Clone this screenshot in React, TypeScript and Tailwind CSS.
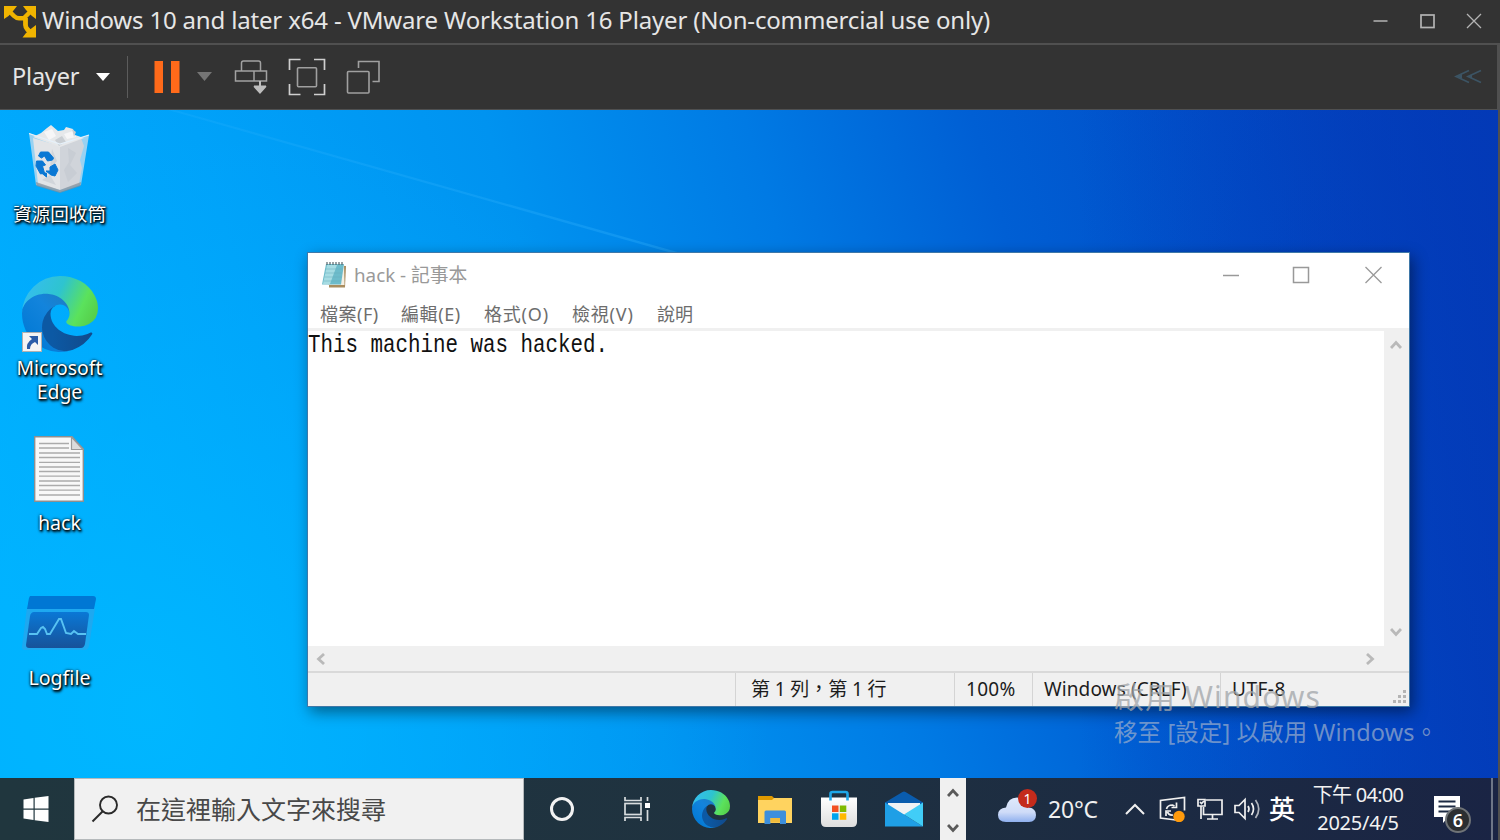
import type { ReactNode } from "react";

const UI = "font-['Noto_Sans','Noto_Sans_CJK_TC',sans-serif]";

function EdgeLogo({ id, className }: { id: string; className: string }) {
  return (
    <svg viewBox="0 0 256 256" className={className}>
      <defs>
        <linearGradient id={`${id}a`} x1="0.25" y1="0.5" x2="1" y2="0.5">
          <stop offset="0" stopColor="#0c59a4" />
          <stop offset="1" stopColor="#114a8b" />
        </linearGradient>
        <linearGradient id={`${id}b`} x1="0.9" y1="0.25" x2="0.2" y2="1">
          <stop offset="0" stopColor="#1b7fcb" />
          <stop offset="0.3" stopColor="#1384dc" />
          <stop offset="1" stopColor="#0078d4" />
        </linearGradient>
        <linearGradient id={`${id}c`} x1="0" y1="0.3" x2="1" y2="0.62">
          <stop offset="0" stopColor="#35bdf1" />
          <stop offset="0.45" stopColor="#2ec4cf" />
          <stop offset="0.8" stopColor="#5be25c" />
          <stop offset="1" stopColor="#56d04c" />
        </linearGradient>
      </defs>
      <g transform="translate(-4.63 -4.92)">
        <path fill={`url(#${id}a)`} d="M235.68 195.48a93.73 93.73 0 0 1-10.54 4.71 101.87 101.87 0 0 1-35.9 6.46c-47.32 0-88.54-32.55-88.54-74.32A31.48 31.48 0 0 1 117.13 105c-42.8 1.8-53.8 46.4-53.8 72.53 0 73.88 68.09 81.37 82.76 81.37 7.91 0 19.84-2.3 27-4.56l1.31-.44a128.34 128.34 0 0 0 66.6-52.8 4 4 0 0 0-5.32-5.62z" />
        <path fill={`url(#${id}b)`} d="M110.34 246.34A79.2 79.2 0 0 1 87.6 225a80.72 80.72 0 0 1 29.53-120c3.12-1.47 8.45-4.13 15.54-4a32.35 32.35 0 0 1 25.69 13 31.88 31.88 0 0 1 6.36 18.66c0-.21 24.46-79.6-80-79.6-43.9 0-80 41.66-80 78.21a130.15 130.15 0 0 0 12.11 56 128 128 0 0 0 156.38 67.11 75.55 75.55 0 0 1-62.78-8z" />
        <path fill={`url(#${id}c)`} d="M156.94 153.78c-.81 1.05-3.3 2.5-3.3 5.66 0 2.61 1.7 5.12 4.72 7.23 14.38 10 41.49 8.68 41.56 8.68a59.56 59.56 0 0 0 30.27-8.35 61.38 61.38 0 0 0 30.43-52.88c.26-22.41-8-37.31-11.34-43.91C228.09 28.76 182.35 4.92 132.61 4.92a128 128 0 0 0-128 126.2c.48-36.54 36.8-66.05 80-66.05 3.5 0 23.46.34 42 10.07 16.34 8.58 24.9 18.94 30.85 29.21 6.18 10.67 7.28 24.15 7.28 29.52s-2.74 13.33-7.8 19.91z" />
      </g>
    </svg>
  );
}

function TitleBar() {
  return (
    <header className="flex h-[43px] items-center bg-[#333333] pr-[17px] pl-1 text-[#e6e6e6]">
      <svg viewBox="0 0 32 32" className="mt-px h-8 w-8 shrink-0" fill="none" stroke="#f0b400" strokeWidth="4">
        <path d="M0 0h13l-3.500 4.500L4.500 10 0 13zM19 0h13v13l-4-3-6-6zM32 19v12.500H18.500l3.500-4.500 6-5z" fill="#f0b400" stroke="none" />
        <path d="M4 4l6 6q2.300 2.300 5 2.300h6" strokeWidth="4.500" />
        <path d="M28 4l-8 8" strokeWidth="4.500" />
        <path d="M28 28l-4.500-4.500q-2-2-2-4.500v-7" strokeWidth="4.800" />
      </svg>
      <h1 className="mb-[3px] ml-[6px] text-[24px] leading-[40px] tracking-[-0.17px] whitespace-pre">
        Windows 10 and later x64 - VMware Workstation 16 Player (Non-commercial use only)
      </h1>
      <svg viewBox="0 0 112 18" className="mb-[2px] ml-auto h-[18px] w-[112px]" fill="none" stroke="#b4b4b4" strokeWidth="1.5">
        <path d="M2.500 9h14" />
        <rect x="50" y="3" width="13" height="12.500" strokeWidth="1.7" />
        <path d="M96 2l14 14M110 2L96 16" strokeWidth="1.300" />
      </svg>
    </header>
  );
}

function Toolbar() {
  return (
    <nav className="mr-[3px] flex h-[64px] items-center bg-[#333333] text-[#e6e6e6]">
      <span className="mb-[3px] ml-[12px] w-[68px] text-[23.500px] leading-[58px] tracking-[-0.2px]">Player</span>
      <svg viewBox="0 0 14 8" className="ml-[16px] h-[8px] w-[14px]">
        <path d="M0 0h14L7 8z" fill="#fff" />
      </svg>
      <div className="ml-[17px] h-[42px] w-px bg-[#5c5c5c]" />
      <svg viewBox="0 0 26 34" className="ml-[26px] h-[34px] w-[26px]" fill="#ff6a1a">
        <path d="M.5 1h8.500v32H.5zM17 1h8.500v32H17z" />
      </svg>
      <svg viewBox="0 0 15 9" className="mb-[2px] ml-[17px] h-[9px] w-[15px]">
        <path d="M0 0h15L7.500 9z" fill="#757575" />
      </svg>
      <svg viewBox="0 0 36 36" className="ml-[22px] h-9 w-9" fill="none" stroke="#a2a2a2" strokeWidth="1.5">
        <path d="M7.500 11.500V4q0-2 2-2h15q2 0 2 2v7.500M1.500 12h31v10h-31zM20 12v10" />
        <path d="M26 22v11M20 27.500h12M21.500 28.500l4.500 5 4.500-5z" stroke="#bdbdbd" strokeWidth="2" fill="#bdbdbd" />
      </svg>
      <svg viewBox="0 0 38 38" className="ml-[18px] h-[38px] w-[38px]" fill="none">
        <path d="M1.500 12V1.500h11M26 1.500h10.500V12M36.500 26v10.500H26M12.500 36.500h-11V26" stroke="#cfcfcf" strokeWidth="1.7" />
        <rect x="9.500" y="9.700" width="19" height="19" rx="1" stroke="#a0a0a0" strokeWidth="1.6" />
      </svg>
      <svg viewBox="0 0 34 34" className="ml-[20px] h-[34px] w-[34px]" fill="none" stroke="#a0a0a0" strokeWidth="1.6">
        <rect x="1.500" y="11.500" width="21.500" height="21.500" rx="1" />
        <path d="M12.500 8V1.500H33V21.500h-6.500" />
      </svg>
      <svg viewBox="0 0 28 16" className="mr-[15px] mb-px ml-auto h-4 w-7" fill="none" stroke="#3c5464" strokeWidth="1.700">
        <path d="M15 1.500L2 7.500l13 6M27 1.500l-13 6 13 6" />
        <path d="M8 5l-5 2.500L8 10zM18 5.500l-4 2 4 2z" fill="#3c5464" stroke="none" />
      </svg>
    </nav>
  );
}

function Wallpaper() {
  return (
    <svg viewBox="0 0 1497 668" preserveAspectRatio="none" className="absolute inset-0 h-full w-full">
      <defs>
        <linearGradient id="wpBase" gradientUnits="userSpaceOnUse" x1="0" y1="470" x2="1500" y2="40">
          <stop offset="0" stopColor="#00aeff" />
          <stop offset="0.2" stopColor="#00a1f9" />
          <stop offset="0.38" stopColor="#0093f0" />
          <stop offset="0.54" stopColor="#007ae4" />
          <stop offset="0.68" stopColor="#005fd4" />
          <stop offset="0.84" stopColor="#014cc7" />
          <stop offset="1" stopColor="#033cb8" />
        </linearGradient>
        <radialGradient id="wpGlow" gradientUnits="userSpaceOnUse" cx="150" cy="600" r="620">
          <stop offset="0" stopColor="#00b8ff" stopOpacity="0.9" />
          <stop offset="1" stopColor="#00b0ff" stopOpacity="0" />
        </radialGradient>
        <linearGradient id="wpEdge" x1="0" y1="0" x2="1" y2="0">
          <stop offset="0.72" stopColor="#0338b6" stopOpacity="0" />
          <stop offset="1" stopColor="#0338b6" stopOpacity="0.7" />
        </linearGradient>
        <linearGradient id="wpBeam" x1="0" y1="0" x2="1" y2="0">
          <stop offset="0" stopColor="#3cb8ff" stopOpacity="0.15" />
          <stop offset="1" stopColor="#3cb8ff" stopOpacity="0.3" />
        </linearGradient>
      </defs>
      <rect width="1497" height="668" fill="url(#wpBase)" />
      <rect width="1497" height="668" fill="url(#wpGlow)" />
      <rect width="1497" height="668" fill="url(#wpEdge)" />
      <path d="M175 0L684 144H675L168 0z" fill="url(#wpBeam)" />
    </svg>
  );
}

function DesktopIcon({
  className,
  labelClass,
  label,
  children,
}: {
  className: string;
  labelClass: string;
  label: string;
  children: ReactNode;
}) {
  return (
    <figure className={`absolute left-0 flex w-[119px] flex-col items-center ${className}`}>
      {children}
      <figcaption
        className={`w-[110px] text-center leading-[24px] text-white [text-shadow:1px_1px_2px_#000,1px_2px_3px_#000,0_0_3px_rgba(0,0,0,0.8)] ${labelClass}`}
      >
        {label}
      </figcaption>
    </figure>
  );
}

function RecycleBin() {
  return (
    <svg viewBox="0 0 62 70" className="mr-[2px] mb-[8px] h-[70px] w-[62px]">
      <path d="M1 9L8 61l24 7 21-7 8-50-29 9z" fill="#d8e4ee" opacity="0.7" />
      <path d="M5 14L10 60l22 6V22z" fill="#e2e4e7" />
      <path d="M32 66V22l21-8 3 8-4 14 2 8-3 16z" fill="#d0d4da" />
      <path d="M5 13l8-4 6-5 4-3 7 6 6-1 2-3 7 2 2 6 9 3-24 9z" fill="#e6e8ea" />
      <path d="M16 8l8-3 4 7-7 4zM36 10l9-3 3 6-9 2z" fill="#f6f6f7" />
      <path d="M27 16l7-4 4 6-7 4zM44 5l4 3-2 5z" fill="#c9ced3" />
      <path d="M40 24l8 5-6 12 7 8-9 9-4-12 5-8zM24 25l5 12-7 8zM14 56l8-5 6 10z" fill="#bfc5cd" opacity="0.5" />
      <path d="M8 58l24 8 21-8-.5 4L32 69 8.500 62z" fill="#878d95" opacity="0.7" />
      <path d="M1 9.500L32 20l29-9" stroke="#e6f1fa" strokeWidth="1.300" fill="none" />
      <path d="M12.500 28l8 0 5 6-1 2-5 1-3-5-3 2-3-2zM8.500 37l6 0 3 4-3 1 2 7-4 1-4.500-8zM22 43l5-3 3 6-3 6-4-1-5-4 4 0zM13.500 49h5v4z" fill="#0a78d4" stroke="#0a78d4" strokeLinejoin="round" />
    </svg>
  );
}

function TextFile() {
  return (
    <svg viewBox="0 0 50 66" className="mr-px mb-[9px] h-[66px] w-[50px]">
      <path d="M.7.7H38L49.300 13v52.300H.7z" fill="#f8f8f8" stroke="#8f8f8f" strokeWidth="1.4" />
      <path d="M37.500 1v12.500H49z" fill="#dcdcdc" stroke="#9a9a9a" strokeWidth="1.200" />
      <path d="M5 7.500h30M5 12h30M5 17h41M5 21.500h41M5 26.300h41M5 31h41M5 35.500h41M5 40.200h41M5 45h41M5 49.500h41M5 54.200h41M5 59h41" stroke="#ababab" strokeWidth="1.300" />
    </svg>
  );
}

function LogfileIcon() {
  return (
    <svg viewBox="0 0 76 56" className="mr-[2px] mb-[15px] h-[56px] w-[76px]">
      <defs>
        <linearGradient id="lf" x1="0" y1="0" x2="0" y2="1">
          <stop offset="0" stopColor="#0a78d6" />
          <stop offset="1" stopColor="#17529a" />
        </linearGradient>
      </defs>
      <path d="M6 12L1 52q0 3 3 3h60q3 0 4-4l6-38z" fill="#2ba4ea" opacity="0.700" />
      <path d="M9 1h63q3 0 3 3l-2 10H6L8 3z" fill="#0077d4" />
      <path d="M13 17h52q3 0 3 3l-4 29q-1 4-4 4H8q-3 0-3-3l4-29q1-4 4-4z" fill="url(#lf)" />
      <path d="M8 39h8l4-6 2-1 2 2 2 5h3L38 24l2 0 5 14 5 1 3-3 4 3h8" fill="none" stroke="#58c2f2" strokeWidth="1.900" />
    </svg>
  );
}

function Notepad() {
  const menus = [
    { text: "檔案(F)", cls: "w-[81px] tracking-[0.5px]" },
    { text: "編輯(E)", cls: "w-[83px] tracking-[0.6px]" },
    { text: "格式(O)", cls: "w-[88px] tracking-[0.8px]" },
    { text: "檢視(V)", cls: "w-[85px] tracking-[0.8px]" },
    { text: "說明", cls: "w-[60px]" },
  ];
  return (
    <section className="absolute top-[142px] left-[307px] flex h-[455px] w-[1103px] flex-col border border-[#3f78a8] bg-white shadow-[3px_5px_14px_rgba(0,0,0,0.45)]">
      <div className="flex h-[44px] items-center pr-[27px] pl-[13px]">
        <svg viewBox="0 0 26 28" className="h-7 w-[26px]">
          <path d="M8 4l17 1-1 21.500H8z" fill="#a98d5f" />
          <path d="M6 4h17l.5 20H7z" fill="#f4efe2" />
          <path d="M5 3h18l-3 20.500H1z" fill="#6dbccb" />
          <path d="M6 4h10L9 23H2z" fill="#b4e3e8" opacity="0.800" />
          <path d="M4.500 8h17M4 12h17M3.500 16h17M3 20h17" stroke="#66aebb" strokeWidth="0.500" />
          <path d="M6 1v3M9 1v3M12 1v3M15 1v3M18 1v3M21 1v3" stroke="#56656b" strokeWidth="1.200" />
        </svg>
        <h2 className="ml-[7px] text-[18.800px] leading-[40px] text-[#999999]">hack - 記事本</h2>
        <svg viewBox="0 0 160 18" className="ml-auto h-[18px] w-[160px]" fill="none" stroke="#999999" strokeWidth="1.500">
          <path d="M1 9.500h16" />
          <rect x="71.500" y="1.500" width="15" height="15" />
          <path d="M143.500 1l16 16M159.500 1l-16 16" strokeWidth="1.300" />
        </svg>
      </div>
      <div className="flex h-[31px] pl-[12px] text-[18px] leading-[34px] text-[#6d6d6d]">
        {menus.map((m) => (
          <span key={m.text} className={`${m.cls} whitespace-nowrap`}>
            {m.text}
          </span>
        ))}
      </div>
      <div className="h-[3px] bg-[#f0f0f0]" />
      <div className="flex h-[316px]">
        <div className="w-[1076px] overflow-hidden pt-px font-['Liberation_Mono',monospace] text-[25px] leading-[28px] text-[#111111]">
          <p className="w-[600px] origin-left scale-x-[0.833] whitespace-pre">This machine was hacked.</p>
        </div>
        <div className="flex flex-1 flex-col items-center justify-between bg-[#f0f0f0] pt-[9px] pr-px pb-[9px]">
          <svg viewBox="0 0 12 10" className="h-[10px] w-3" fill="none" stroke="#b9b9b9" strokeWidth="2.800">
            <path d="M1 8l5-5.500L11 8" />
          </svg>
          <svg viewBox="0 0 12 10" className="h-[10px] w-3" fill="none" stroke="#b9b9b9" strokeWidth="2.800">
            <path d="M1 2l5 5.500L11 2" />
          </svg>
        </div>
      </div>
      <div className="flex h-[25px] items-center justify-between bg-[#f0f0f0] pr-[34px] pl-[8px]">
        <svg viewBox="0 0 10 12" className="h-3 w-[10px]" fill="none" stroke="#b9b9b9" strokeWidth="2.800">
          <path d="M8 1L2.500 6 8 11" />
        </svg>
        <svg viewBox="0 0 10 12" className="h-3 w-[10px]" fill="none" stroke="#b9b9b9" strokeWidth="2.800">
          <path d="M2 1l5.500 5L2 11" />
        </svg>
      </div>
      <div className="flex flex-1 items-stretch border-t-2 border-[#d9d9d9] bg-[#f0f0f0] text-[19px] leading-[33px] text-[#1c1c1c]">
        <div className="w-[427px]" />
        <div className="w-[219px] border-l border-[#d4d4d4] pl-[15px] tracking-[-0.1px] whitespace-pre">第 1 列，第 1 行</div>
        <div className="w-[78px] border-l border-[#d4d4d4] pl-[11px] tracking-[0.3px]">100%</div>
        <div className="w-[188px] border-l border-[#d4d4d4] pl-[11px] tracking-[0.1px] whitespace-pre">Windows (CRLF)</div>
        <div className="flex-1 border-l border-[#d4d4d4] pl-[11px] tracking-[0.5px]">UTF-8</div>
        <svg viewBox="0 0 14 14" className="mr-[2px] mb-[2px] h-[14px] w-[14px] self-end" fill="#b4b4b4">
          <path d="M10 0h3v3h-3zM10 5h3v3h-3zM5 5h3v3H5zM10 10h3v3h-3zM5 10h3v3H5zM0 10h3v3H0z" />
        </svg>
      </div>
    </section>
  );
}

function Activation() {
  return (
    <div className="absolute top-[567px] left-[1114px] whitespace-pre">
      <p className="text-[30px] leading-[40px] tracking-[1.1px] text-[#a0a4a8]/75">啟用 Windows</p>
      <p className="mt-[-3px] text-[23.500px] leading-[36px] tracking-[0.1px] text-[#9fb0cc]/70">移至 [設定] 以啟用 Windows。</p>
    </div>
  );
}

function Taskbar() {
  return (
    <footer className="flex h-[62px] items-stretch bg-linear-to-r from-[#20363e] via-[#1f3240] to-[#1a2444] text-white">
      <button className="flex w-[74px] items-center justify-center pr-[3px]">
        <svg viewBox="0 0 26 26" className="h-[26px] w-[26px]" fill="#fff">
          <path d="M.5 3.500L10.500 2v10.500H.5zM11.700 1.800L25.500 0v12.500H11.700zM.5 13.700h10V24L.5 22.500zM11.700 13.700h13.800V26l-13.800-1.800z" />
        </svg>
      </button>
      <div className="flex w-[450px] items-center border border-[#b5b9bb] bg-[#f1f1f1] pl-[16px]">
        <svg viewBox="0 0 28 28" className="h-7 w-7" fill="none" stroke="#2a2a2a" strokeWidth="1.900">
          <circle cx="17.500" cy="10" r="8.500" />
          <path d="M11.500 16.500L1.500 26.500" />
        </svg>
        <span className="ml-[17px] text-[25px] leading-[56px] text-[#484848]">在這裡輸入文字來搜尋</span>
      </div>
      <div className="flex w-[76px] items-center justify-center">
        <svg viewBox="0 0 26 26" className="h-[26px] w-[26px]" fill="none" stroke="#f2f2f2" strokeWidth="3">
          <circle cx="13" cy="13" r="10.500" />
        </svg>
      </div>
      <div className="flex w-[74px] items-center justify-center pb-px">
        <svg viewBox="0 0 28 26" className="h-[26px] w-7" fill="none" stroke="#d8dcde" strokeWidth="1.700">
          <rect x="2" y="7.500" width="16" height="11" />
          <path d="M2 1v3.500h16V1M2 25v-3.500h16V25M24.500 1v4M24.500 14v11" />
          <rect x="22" y="7" width="5" height="5" fill="#fff" stroke="none" />
        </svg>
      </div>
      <div className="flex w-[74px] items-center justify-center">
        <EdgeLogo id="tb" className="h-[38px] w-[38px]" />
      </div>
      <div className="flex w-[54px] items-center justify-center">
        <svg viewBox="0 0 34 29" className="h-[29px] w-[34px]">
          <path d="M0 1h14l2 2v4H0z" fill="#e09a00" />
          <path d="M0 5h14l2-2h18v25H0z" fill="#ffd35f" />
          <path d="M6.500 29V17q0-1.500 1.500-1.500h18.500q1.500 0 1.500 1.500v12h-6v-6h-9.500v6z" fill="#3d8fdc" />
          <path d="M12.500 23H22v4.500h-9.500z" fill="#f0bb3c" />
        </svg>
      </div>
      <div className="flex w-[73px] items-center justify-center">
        <svg viewBox="0 0 36 38" className="h-[38px] w-9">
          <defs>
            <linearGradient id="st" x1="0" y1="0" x2="0" y2="1">
              <stop offset="0" stopColor="#fff" />
              <stop offset="1" stopColor="#dedede" />
            </linearGradient>
          </defs>
          <path d="M0 7.500h36V32q0 5-5 5H5q-5 0-5-5z" fill="url(#st)" />
          <path d="M9.500 10.500V4q0-2 2-2h13q2 0 2 2v6.500" fill="none" stroke="#1ea7e8" strokeWidth="2.600" />
          <path d="M11 15.500h6.500V22H11z" fill="#f25022" />
          <path d="M18.800 15.500h6.500V22h-6.500z" fill="#7fba00" />
          <path d="M11 23.300h6.500v6.500H11z" fill="#00a4ef" />
          <path d="M18.800 23.300h6.500v6.500h-6.500z" fill="#ffb900" />
        </svg>
      </div>
      <div className="flex w-[57px] items-center justify-center">
        <svg viewBox="0 0 38 36" className="h-9 w-[38px]">
          <path d="M0 11.500L17.500 1q1.500-.9 3 0L38 11.500v4H0z" fill="#0a5cad" />
          <path d="M3 12h32v3L19 24 3 15z" fill="#f0f2f4" />
          <path d="M0 11.500L38 35.500H0z" fill="#1f9fe6" />
          <path d="M38 11.500v24L19 23.500z" fill="#41cdf7" />
        </svg>
      </div>
      <div className="ml-[8px] flex w-[26px] flex-col items-center justify-between bg-[#f0f0f0] pt-[10px] pb-[7px]">
        <svg viewBox="0 0 12 10" className="h-[10px] w-3" fill="none" stroke="#5a5a5a" strokeWidth="2.800">
          <path d="M1 8l5-5.500L11 8" />
        </svg>
        <svg viewBox="0 0 12 10" className="h-[10px] w-3" fill="none" stroke="#5a5a5a" strokeWidth="2.800">
          <path d="M1 2l5 5.500L11 2" />
        </svg>
      </div>
      <div className="ml-[31px] flex items-center">
        <div className="relative h-[34px] w-[40px]">
          <svg viewBox="0 0 40 34" className="h-[34px] w-10">
            <defs>
              <linearGradient id="cl" x1="0" y1="0" x2="0" y2="1">
                <stop offset="0" stopColor="#dfeafc" />
                <stop offset="0.600" stopColor="#cfdcf8" />
                <stop offset="1" stopColor="#8fb0ee" />
              </linearGradient>
            </defs>
            <path d="M9 30q-8 0-8-7T9 15.500Q11 5.500 20 5.500t12 10q7 1 7 7.500t-7 7z" fill="url(#cl)" />
          </svg>
          <span className="absolute top-[-3px] right-0 h-[19px] w-[19px] rounded-full bg-[#c42b1c] text-center text-[14px] leading-[19px]">1</span>
        </div>
        <span className="ml-[11px] w-[50px] text-[23px] leading-[56px] tracking-[-0.2px] text-[#f0f0f0]">20°C</span>
      </div>
      <div className="ml-[27px] flex items-center">
        <svg viewBox="0 0 20 12" className="h-3 w-5" fill="none" stroke="#f0f0f0" strokeWidth="2">
          <path d="M1 11L10 2l9 9" />
        </svg>
        <svg viewBox="0 0 28 26" className="ml-[14px] h-[26px] w-7" fill="none" stroke="#f0f0f0" strokeWidth="1.700">
          <path d="M17 24L1.500 22V4.500L25.500 1.500v13" />
          <path d="M7.500 13q1-4 6-4l2 1M17.500 6.500v5h-5M7 20v-5h5M8.500 16q1 3.500 5.500 3" />
          <circle cx="20" cy="20.500" r="5.700" fill="#ff9a0c" stroke="none" />
        </svg>
        <svg viewBox="0 0 26 24" className="ml-[10px] h-6 w-[26px]" fill="none" stroke="#f0f0f0" strokeWidth="1.700">
          <path d="M9 3h16v14.500H6.500V10" />
          <path d="M1 2.500h7v6.500H1zM3 5l1.500 1.500L7 4M4 9v13M15.500 17.500V22M10 22h11" />
        </svg>
        <svg viewBox="0 0 27 24" className="ml-[11px] h-6 w-[27px]" fill="none" stroke="#f0f0f0" strokeWidth="1.700">
          <path d="M1 8.500h4l6-6v19l-6-6H1z" />
          <path d="M14 9q2 3 0 6M17.500 6q4 6 0 12" />
          <path d="M21.500 3q6.500 9 0 18" opacity="0.700" />
        </svg>
        <span className="ml-[8px] w-[27px] text-[26px] leading-[54px] font-medium">英</span>
      </div>
      <div className="ml-[14px] flex w-[96px] flex-col items-center pt-[3px] text-[20px] leading-[27px] tracking-[-0.7px] whitespace-pre text-[#f2f2f2]">
        <time>下午 04:00</time>
        <time className="mt-px tracking-[-0.25px]">2025/4/5</time>
      </div>
      <div className="relative ml-[28px] w-[40px]">
        <svg viewBox="0 0 26 27" className="mt-[18px] h-[27px] w-[26px]">
          <path d="M0 0h26v21H14.500L9 27v-6H0z" fill="#fff" />
          <path d="M4.500 5.500h17M4.500 10.500h17M4.500 15.500h11" stroke="#1c2a43" strokeWidth="1.800" />
        </svg>
        <span className="absolute top-[29px] left-[11px] flex h-[26px] w-[26px] items-center justify-center rounded-full border-2 border-[#6f7377] bg-[#2b2e31] text-[18px] leading-none font-semibold">
          6
        </span>
      </div>
      <div className="ml-auto w-[7px] border-l-2 border-[#6e7688]" />
      <div className="w-[2px] bg-[#505050]" />
    </footer>
  );
}

export default function App() {
  return (
    <div className={`flex h-[840px] w-[1500px] flex-col overflow-hidden bg-[#505050] ${UI}`}>
      <TitleBar />
      <div className="h-[2px] shrink-0 bg-[#505050]" />
      <Toolbar />
      <div className="h-px shrink-0 bg-[#505050]" />
      <main className="relative mr-[2px] h-[668px] shrink-0 overflow-hidden">
        <Wallpaper />
        <DesktopIcon className="top-[14px]" labelClass="text-[18.600px]" label="資源回收筒">
          <RecycleBin />
        </DesktopIcon>
        <DesktopIcon className="top-[166px]" labelClass="px-2 text-[19.400px]" label="Microsoft Edge">
          <div className="relative mb-[4px] h-[76px] w-[76px]">
            <EdgeLogo id="dk" className="h-[76px] w-[76px]" />
            <svg viewBox="0 0 20 20" className="absolute bottom-0 left-0 h-5 w-5">
              <rect x="0.500" y="0.500" width="19" height="19" fill="#f4f4f4" stroke="#b0b0b0" />
              <path d="M7 4h9v9l-3-3q-5 2-5 7H5q-1-6 5-10z" fill="#2b5ca8" />
            </svg>
          </div>
        </DesktopIcon>
        <DesktopIcon className="top-[326px]" labelClass="text-[19.600px]" label="hack">
          <TextFile />
        </DesktopIcon>
        <DesktopIcon className="top-[485px]" labelClass="text-[19.600px]" label="Logfile">
          <LogfileIcon />
        </DesktopIcon>
        <Notepad />
        <Activation />
      </main>
      <Taskbar />
    </div>
  );
}
